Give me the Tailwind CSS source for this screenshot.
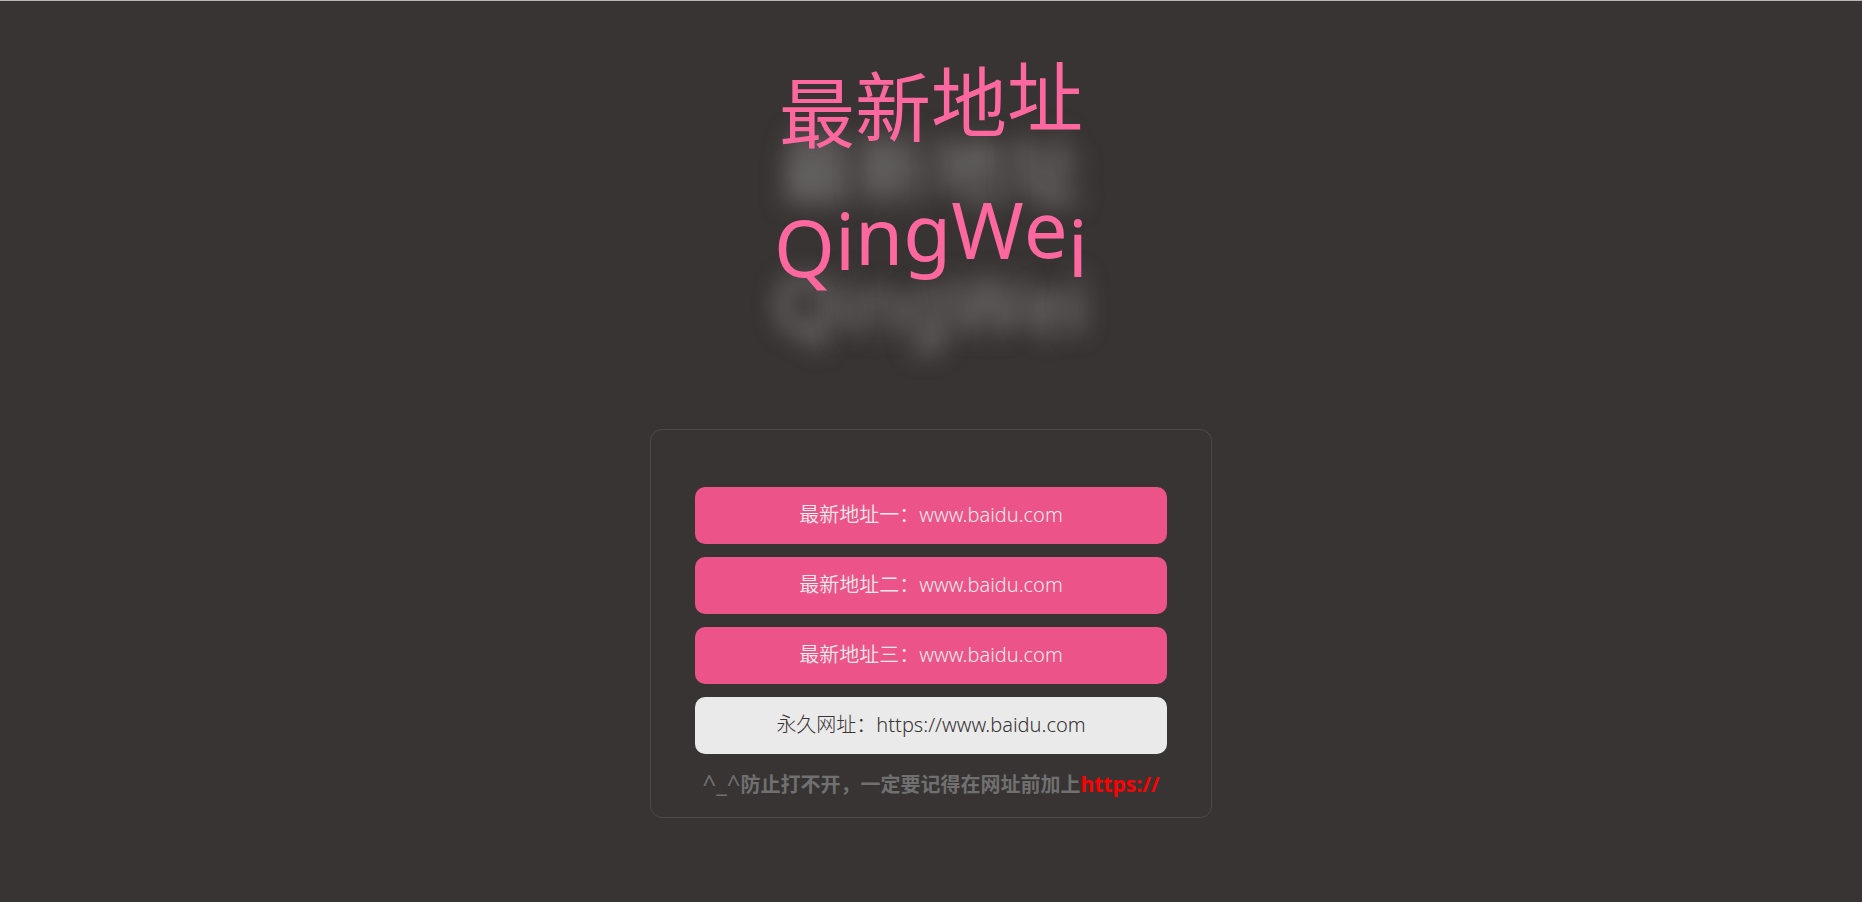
<!DOCTYPE html>
<html lang="zh-CN">
<head>
<meta charset="utf-8">
<meta name="viewport" content="width=device-width, initial-scale=1">
<title>最新地址</title>
<script src="https://cdn.jsdelivr.net/npm/@tailwindcss/browser@4"></script>
</head>
<body class="min-h-screen border-t border-[#b9b5b3] bg-[#383433] font-['Noto_Sans','Noto_Sans_CJK_SC',sans-serif]">
<main class="flex flex-col items-center px-4 pt-11 pb-20">
  <h1 class="flex flex-col items-center text-[#ff689f]">
    <span class="flex h-[134px] items-end text-[76px] leading-[100px]">
      <span class="mb-[16px] [text-shadow:0_56px_24px_#cccccc88]">最</span>
      <span class="mb-[22px] [text-shadow:0_62px_24px_#cccccc88]">新</span>
      <span class="mb-[27px] [text-shadow:0_67px_24px_#cccccc88]">地</span>
      <span class="mb-[32px] [text-shadow:0_72px_24px_#cccccc88]">址</span>
    </span>
    <span class="flex h-[134px] items-end text-[78px] leading-[100px]">
      <span class="mb-[16px] [text-shadow:0_56px_24px_#cccccc99]">Q</span>
      <span class="mb-[23px] [text-shadow:0_63px_24px_#cccccc88]">i</span>
      <span class="mb-[28px] [text-shadow:0_68px_24px_#cccccc88]">n</span>
      <span class="mb-[32px] [text-shadow:0_72px_24px_#cccccc88]">g</span>
      <span class="mb-[34px] [text-shadow:0_74px_24px_#cccccc88]">W</span>
      <span class="mb-[35px] [text-shadow:0_75px_24px_#cccccc88]">e</span>
      <span class="mb-[16px] [text-shadow:0_56px_24px_#cccccc99]">i</span>
    </span>
  </h1>
  <section class="mt-[116px] w-full max-w-[562px] rounded-xl border border-[#4d4948] px-11 pt-[57px] pb-[18px] text-center text-xl">
    <nav class="flex flex-col gap-[13px] font-[350] leading-[55px]">
      <a href="https://www.baidu.com" class="rounded-[10px] bg-[#ec5389] pb-[2px] text-[#eaeaea]">最新地址一：www.baidu.com</a>
      <a href="https://www.baidu.com" class="rounded-[10px] bg-[#ec5389] pb-[2px] text-[#eaeaea]">最新地址二：www.baidu.com</a>
      <a href="https://www.baidu.com" class="rounded-[10px] bg-[#ec5389] pb-[2px] text-[#eaeaea]">最新地址三：www.baidu.com</a>
      <a href="https://www.baidu.com" class="rounded-[10px] bg-[#eaeaea] pb-[2px] font-light text-[#383433]">永久网址：https://www.baidu.com</a>
    </nav>
    <p class="mt-[15px] font-bold leading-7 text-[#707070]"><span class="text-2xl/7 font-normal">^_^</span>防止打不开，一定要记得在网址前加上<span class="text-[21px] text-[#ff0000]">https://</span></p>
  </section>
</main>
</body>
</html>
